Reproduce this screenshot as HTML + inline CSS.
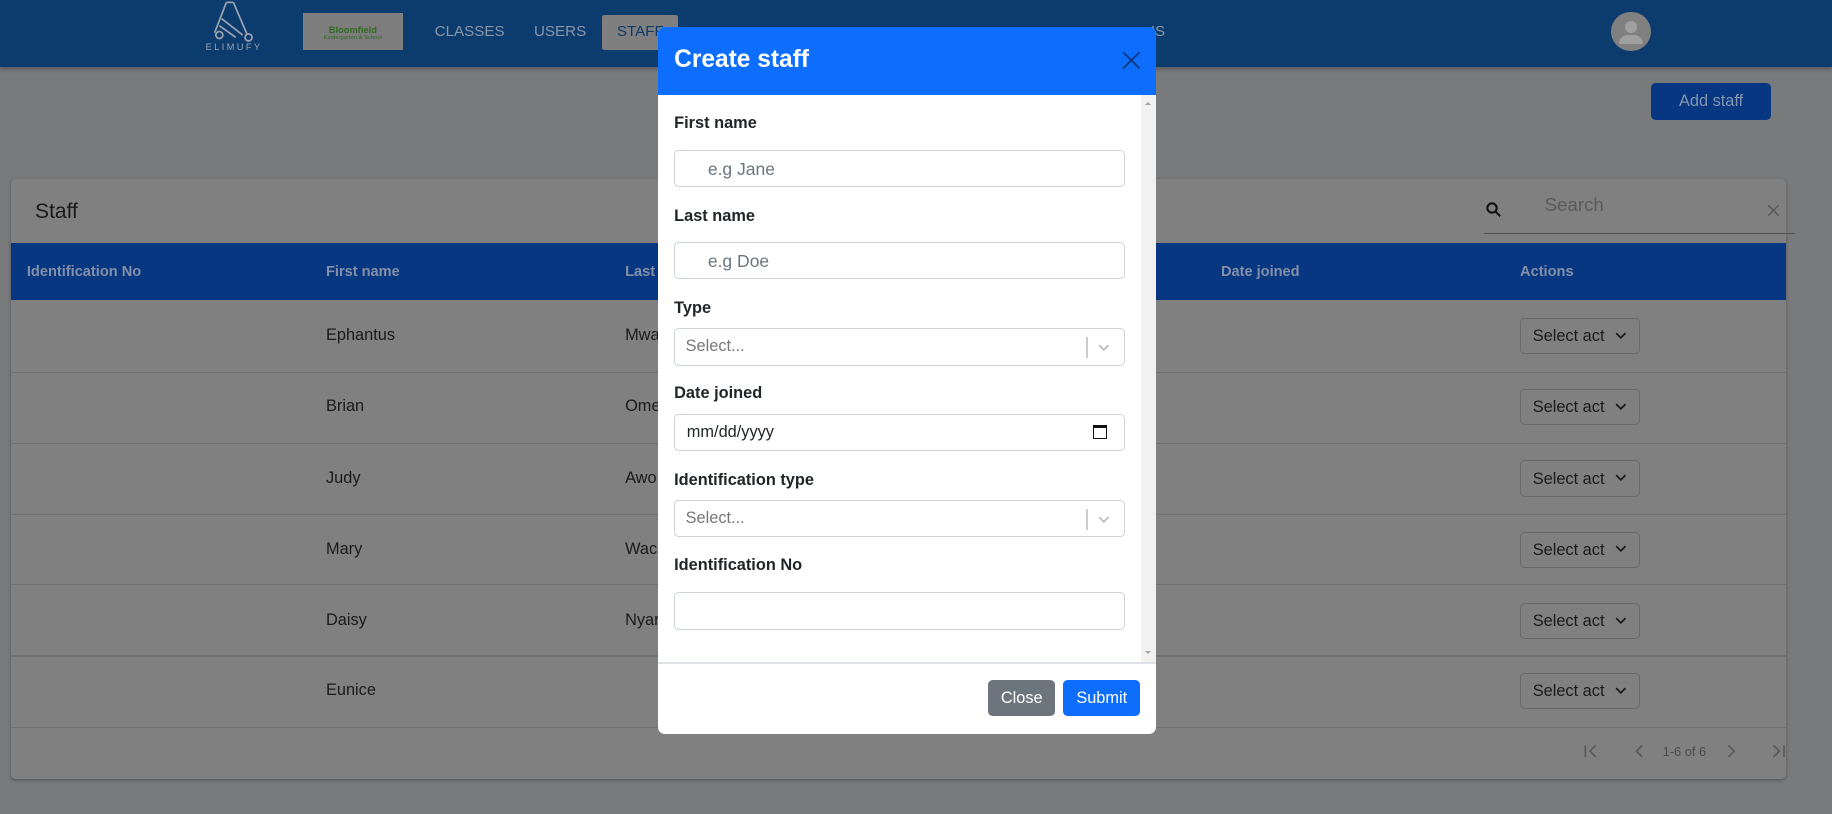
<!DOCTYPE html>
<html><head><meta charset="utf-8"><style>
html{zoom:1.16837}
body{margin:0;width:1568px;height:697px;position:relative;overflow:hidden;background:#797a7c;font-family:"Liberation Sans",sans-serif}
.a{position:absolute}
.hdr{left:0;top:0;width:1568px;height:57px;background:#0c3b6e;box-shadow:0 2px 4px rgba(0,0,0,.3)}
.nav{color:#8a97a8;font-size:13px;top:20px}
.card{left:9px;top:153px;width:1520px;height:514px;background:#808080;border-radius:4px;box-shadow:0 1px 3px rgba(0,0,0,.3)}
.th{top:208px;left:9px;width:1520px;height:49px;background:#063780}
.thc{top:226px;color:#8590a8;font-weight:bold;font-size:12.5px}
.td{color:#1a1a1a;font-size:14px}
.row{left:9px;width:1520px;height:1px;background:#707070}
.sel{left:1301px;width:103px;height:31px;border:1px solid #6a6a6a;border-radius:4px;font-size:14px;color:#1a1a1a;box-sizing:border-box;padding:7px 0 0 10px}
.sel svg{position:absolute;left:80px;top:11px}
.modal{left:563px;top:23px;width:426px;height:605px;background:#fff;border-radius:6px;overflow:hidden}
.mh{left:0;top:0;width:426px;height:58px;background:#0d6efd}
.lbl{left:14px;font-weight:bold;font-size:14px;color:#212529}
.inp{left:14px;width:386px;height:32px;border:1px solid #ced4da;border-radius:4px;box-sizing:border-box;font-size:15px;color:#6c757d}
.btn{top:559px;height:31px;border-radius:4px;color:#fff;font-size:14px;text-align:center;line-height:31px}
.pg{top:636px}
</style></head><body>
<div class="a hdr"></div>
<svg class="a" style="left:180px;top:0" width="40" height="38" viewBox="0 0 40 38" fill="none" stroke="#9aa3b0" stroke-width="1.5"><path d="M14 2 L4 28 M20 2 L32 30 M10 16 L28 30 M8 22 L22 32 M14 2 L20 2"/><circle cx="8" cy="30" r="3"/><circle cx="33" cy="32" r="3"/></svg>
<div class="a" style="left:176px;top:36px;font-size:8px;letter-spacing:2px;color:#9aa3b0">ELIMUFY</div>
<div class="a" style="left:259px;top:11px;width:86px;height:32px;background:#7d7d7d"><div style="color:#2e6a20;font-size:8px;font-weight:bold;text-align:center;margin-top:10px">Bloomfield</div><div style="color:#2e6a20;font-size:5px;text-align:center">Kindergarten &amp; School</div></div>
<div class="a nav" style="left:372px">CLASSES</div>
<div class="a nav" style="left:457px">USERS</div>
<div class="a" style="left:515px;top:13px;width:65px;height:30px;background:#7f7f7f;border-radius:2px"></div>
<div class="a nav" style="left:528px;color:#0c3b6e">STAFF</div>
<div class="a nav" style="left:985px">IS</div>
<div class="a" style="left:1379px;top:10px;width:34px;height:34px;border-radius:50%;background:#808080"><div style="position:absolute;left:12px;top:8px;width:10px;height:10px;border-radius:50%;background:#a0a0a0"></div><div style="position:absolute;left:7px;top:20px;width:20px;height:8px;border-radius:10px 10px 0 0;background:#a0a0a0"></div></div>
<div class="a" style="left:1413px;top:71px;width:103px;height:32px;background:#063780;border-radius:4px;color:#8595b0;font-size:14px;text-align:center;line-height:32px">Add staff</div>
<div class="a card"></div>
<div class="a" style="left:30px;top:171px;font-size:18px;color:#1a1a1a">Staff</div>
<svg class="a" style="left:1271px;top:172px" width="16" height="16" viewBox="0 0 16 16" fill="none" stroke="#111" stroke-width="1.8"><circle cx="6" cy="6" r="4"/><path d="M9 9 L13 13"/></svg>
<div class="a" style="left:1322px;top:166px;font-size:16px;color:#5a5a5a">Search</div>
<svg class="a" style="left:1512px;top:175px" width="11" height="11" viewBox="0 0 11 11" stroke="#5a5a5a" stroke-width="1.3"><path d="M1 1 L10 10 M10 1 L1 10"/></svg>
<div class="a" style="left:1270px;top:199px;width:266px;height:1px;background:#505050"></div>
<div class="a th"></div>
<div class="a thc" style="left:23px">Identification No</div>
<div class="a thc" style="left:279px">First name</div>
<div class="a thc" style="left:535px">Last</div>
<div class="a thc" style="left:1045px">Date joined</div>
<div class="a thc" style="left:1301px">Actions</div>
<div class="a td" style="left:279px;top:279px">Ephantus</div><div class="a td" style="left:535px;top:279px">Mwa</div>
<div class="a td" style="left:279px;top:340px">Brian</div><div class="a td" style="left:535px;top:340px">Ome</div>
<div class="a td" style="left:279px;top:401px">Judy</div><div class="a td" style="left:535px;top:401px">Awo</div>
<div class="a td" style="left:279px;top:462px">Mary</div><div class="a td" style="left:535px;top:462px">Wac</div>
<div class="a td" style="left:279px;top:523px">Daisy</div><div class="a td" style="left:535px;top:523px">Nyar</div>
<div class="a td" style="left:279px;top:583px">Eunice</div>
<div class="a row" style="top:318px"></div><div class="a row" style="top:379px"></div><div class="a row" style="top:440px"></div><div class="a row" style="top:500px"></div><div class="a row" style="top:561px"></div><div class="a row" style="top:622px"></div>
<div class="a sel" style="top:272px">Select act<svg width="10" height="6" viewBox="0 0 10 6" fill="none" stroke="#1a1a1a" stroke-width="1.5"><path d="M1 1 L5 5 L9 1"/></svg></div>
<div class="a sel" style="top:333px">Select act<svg width="10" height="6" viewBox="0 0 10 6" fill="none" stroke="#1a1a1a" stroke-width="1.5"><path d="M1 1 L5 5 L9 1"/></svg></div>
<div class="a sel" style="top:394px">Select act<svg width="10" height="6" viewBox="0 0 10 6" fill="none" stroke="#1a1a1a" stroke-width="1.5"><path d="M1 1 L5 5 L9 1"/></svg></div>
<div class="a sel" style="top:455px">Select act<svg width="10" height="6" viewBox="0 0 10 6" fill="none" stroke="#1a1a1a" stroke-width="1.5"><path d="M1 1 L5 5 L9 1"/></svg></div>
<div class="a sel" style="top:516px">Select act<svg width="10" height="6" viewBox="0 0 10 6" fill="none" stroke="#1a1a1a" stroke-width="1.5"><path d="M1 1 L5 5 L9 1"/></svg></div>
<div class="a sel" style="top:576px">Select act<svg width="10" height="6" viewBox="0 0 10 6" fill="none" stroke="#1a1a1a" stroke-width="1.5"><path d="M1 1 L5 5 L9 1"/></svg></div>
<svg class="a pg" style="left:1355px" width="14" height="14" viewBox="0 0 14 14" fill="none" stroke="#5a5a5a" stroke-width="1.5"><path d="M2 2 V12 M11 2 L6 7 L11 12"/></svg>
<svg class="a pg" style="left:1398px" width="10" height="14" viewBox="0 0 10 14" fill="none" stroke="#5a5a5a" stroke-width="1.5"><path d="M8 2 L3 7 L8 12"/></svg>
<div class="a" style="left:1423px;top:637px;font-size:11px;color:#4a4a4a">1-6 of 6</div>
<svg class="a pg" style="left:1477px" width="10" height="14" viewBox="0 0 10 14" fill="none" stroke="#5a5a5a" stroke-width="1.5"><path d="M2 2 L7 7 L2 12"/></svg>
<svg class="a pg" style="left:1515px" width="14" height="14" viewBox="0 0 14 14" fill="none" stroke="#5a5a5a" stroke-width="1.5"><path d="M12 2 V12 M3 2 L8 7 L3 12"/></svg>

<div class="a modal">
<div class="a mh"></div>
<div class="a" style="left:14px;top:16px;font-size:21px;font-weight:bold;color:#fff">Create staff</div>
<svg class="a" style="left:397px;top:21px" width="16" height="16" viewBox="0 0 16 16" stroke="#0a3a80" stroke-width="1.6"><path d="M1 1 L15 15 M15 1 L1 15"/></svg>
<div class="a" style="left:414px;top:58px;width:12px;height:486px;background:#f1f1f1"></div>
<div class="a" style="left:417px;top:62px;width:0;height:0;border:3px solid transparent;border-bottom-color:#a3a3a3"></div>
<div class="a" style="left:417px;top:534px;width:0;height:0;border:3px solid transparent;border-top-color:#a3a3a3"></div>
<div class="a lbl" style="top:75px">First name</div>
<div class="a inp" style="top:105px;padding:7px 0 0 28px">e.g Jane</div>
<div class="a lbl" style="top:154px">Last name</div>
<div class="a inp" style="top:184px;padding:7px 0 0 28px">e.g Doe</div>
<div class="a lbl" style="top:233px">Type</div>
<div class="a inp" style="top:258px;padding:7px 0 0 9px;font-size:14px;color:#777">Select...<span style="position:absolute;left:352px;top:7px;width:1px;height:18px;background:#ccc"></span><svg style="position:absolute;left:362px;top:13px" width="10" height="6" viewBox="0 0 10 6" fill="none" stroke="#bbb" stroke-width="1.5"><path d="M1 1 L5 5 L9 1"/></svg></div>
<div class="a lbl" style="top:306px">Date joined</div>
<div class="a inp" style="top:331px;padding:7px 0 0 10px;color:#212529;font-size:14px">mm/dd/yyyy<span style="position:absolute;left:358px;top:9px;width:12px;height:12px;border:1.5px solid #111;border-top-width:3px;box-sizing:border-box"></span></div>
<div class="a lbl" style="top:380px">Identification type</div>
<div class="a inp" style="top:405px;padding:7px 0 0 9px;font-size:14px;color:#777">Select...<span style="position:absolute;left:352px;top:7px;width:1px;height:18px;background:#ccc"></span><svg style="position:absolute;left:362px;top:13px" width="10" height="6" viewBox="0 0 10 6" fill="none" stroke="#bbb" stroke-width="1.5"><path d="M1 1 L5 5 L9 1"/></svg></div>
<div class="a lbl" style="top:453px">Identification No</div>
<div class="a inp" style="top:484px"></div>
<div class="a" style="left:0;top:544px;width:426px;height:1px;background:#dee2e6"></div>
<div class="a btn" style="left:283px;width:57px;background:#6c757d">Close</div>
<div class="a btn" style="left:347px;width:66px;background:#0d6efd">Submit</div>
</div>
</body></html>
